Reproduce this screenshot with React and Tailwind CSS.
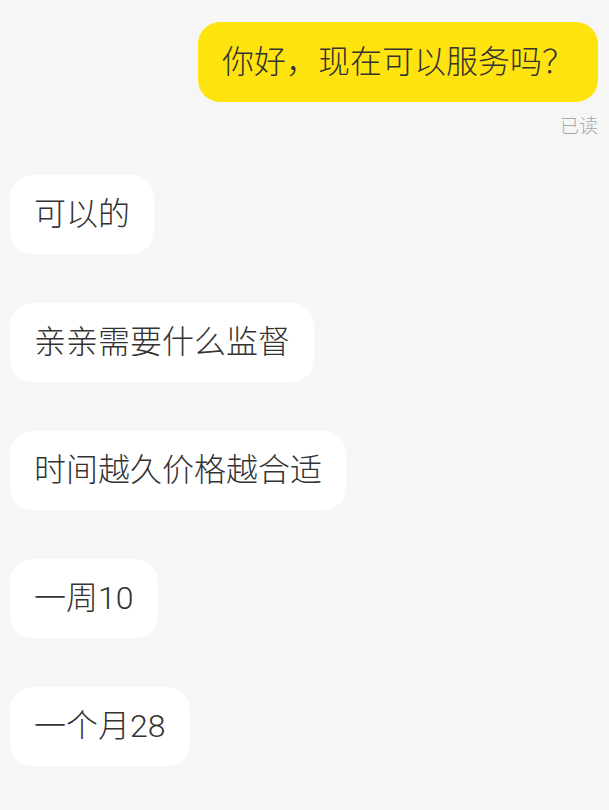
export default function App() {
  const msgs = ["可以的", "亲亲需要什么监督", "时间越久价格越合适", "一周10", "一个月28"];
  return (
    <div
      className="w-[609px] h-[810px] bg-[#f6f6f6] overflow-hidden text-[#333333]"
      style={{ fontFamily: 'Roboto, "Noto Sans CJK SC", "Noto Sans", sans-serif' }}
    >
      <div className="flex flex-col items-end pt-[22px] pr-[11px]">
        <div className="bg-[#ffe30f] rounded-[22px] pl-[24px] pr-[24px] py-[24px] text-[32px] leading-[32px] font-light">
          你好，现在可以服务吗？
        </div>
        <div className="mt-[15px] text-[19px] leading-[20px] text-[#a8a8a8] font-light">已读</div>
      </div>
      <div className="flex flex-col items-start gap-[49px] pl-[10px] mt-[38px]">
        {msgs.map((m) => (
          <div key={m} className="bg-white rounded-[22px] px-[24px] py-[24px] text-[32px] leading-[31px] font-light">
            {m}
          </div>
        ))}
      </div>
    </div>
  );
}
